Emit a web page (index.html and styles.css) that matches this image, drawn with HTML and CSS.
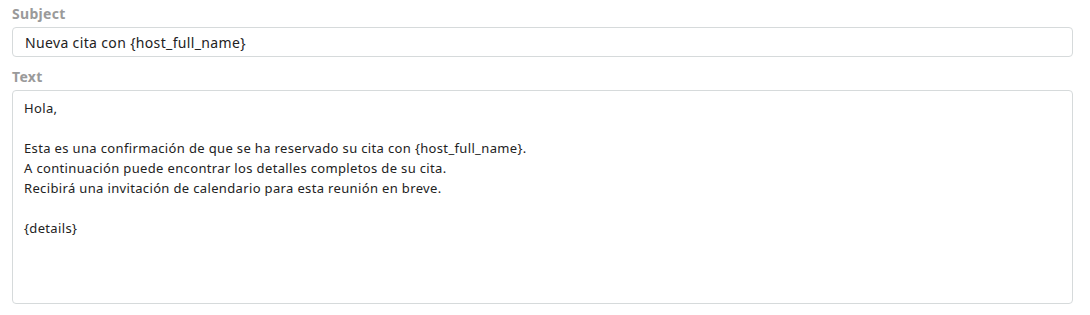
FILE: index.html
```html
<!DOCTYPE html>
<html lang="es">
<head>
    <meta charset="UTF-8">
    <title>Email template</title>
    <link rel="stylesheet" href="styles.css">
</head>
<body>
    <form class="template-form">
        <label class="field-label" for="subject">Subject</label>
        <input class="field-input" id="subject" type="text" value="Nueva cita con {host_full_name}">

        <label class="field-label" for="body">Text</label>
        <textarea class="field-textarea" id="body">Hola,

Esta es una confirmación de que se ha reservado su cita con {host_full_name}.
A continuación puede encontrar los detalles completos de su cita.
Recibirá una invitación de calendario para esta reunión en breve.

{details}</textarea>
    </form>
</body>
</html>
```

FILE: styles.css
```css
* {
    margin: 0;
    padding: 0;
    box-sizing: border-box;
}

body {
    font-family: "Noto Sans", Lato, sans-serif;
    background: #fff;
    color: #222;
    padding: 4px 17px 0 12px;
}

.template-form {
    display: flex;
    flex-direction: column;
}

.field-label {
    font-size: 14px;
    font-weight: 700;
    color: #9a9a9a;
    line-height: 20px;
    letter-spacing: 0.3px;
    margin-bottom: 3px;
}

.field-input,
.field-textarea {
    width: 100%;
    border: 1px solid #d6dadb;
    border-radius: 4px;
    background: #fff;
    color: #222;
    font-family: inherit;
    letter-spacing: 0.35px;
    outline: none;
}

.field-input {
    height: 30px;
    padding: 0 12px;
    font-size: 14px;
    margin-bottom: 10px;
}

.field-textarea {
    height: 214px;
    padding: 7px 11px 3px;
    font-size: 13px;
    line-height: 20px;
    resize: none;
}
```
